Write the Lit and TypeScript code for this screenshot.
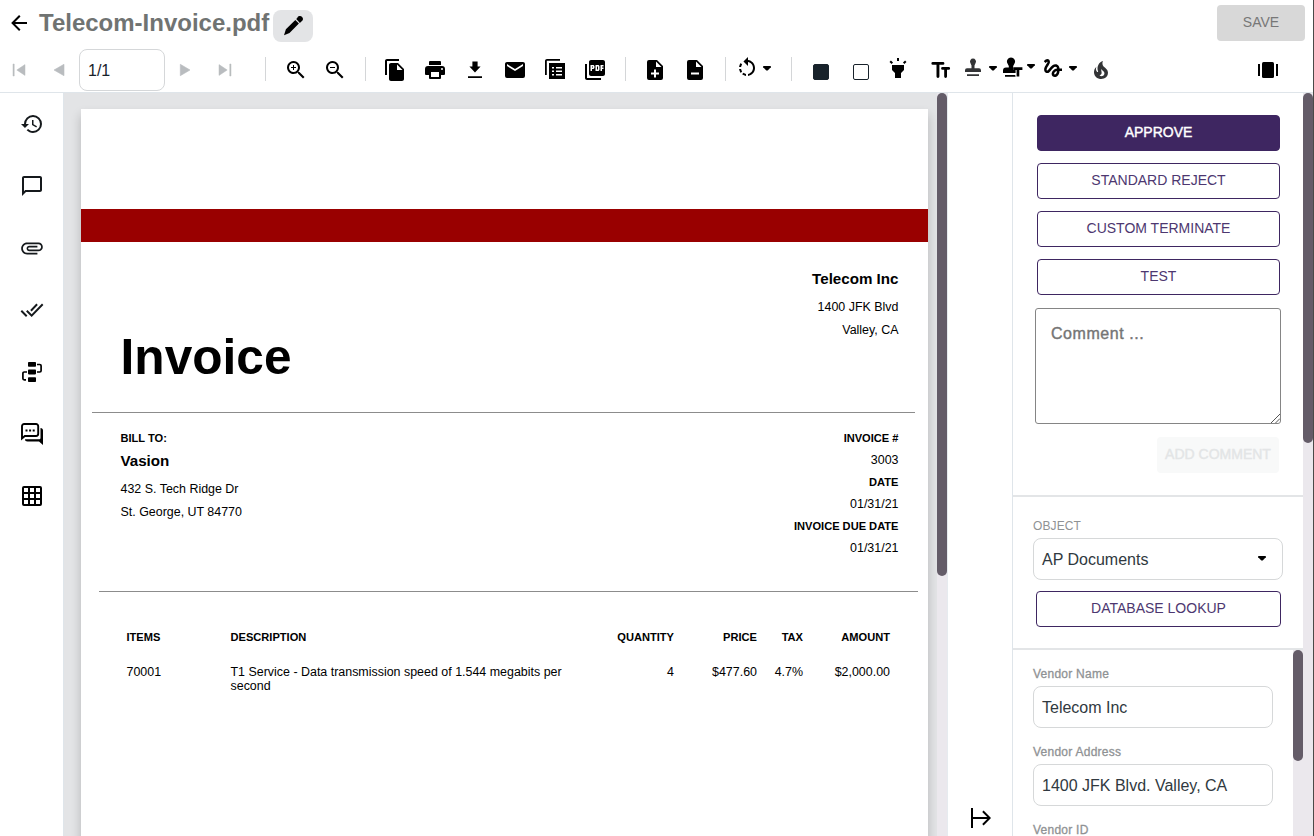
import { LitElement, html, css, svg, nothing } from "lit";
import { customElement, property } from "lit/decorators.js";

const ICONS: Record<string, unknown> = {
  back: svg`<path d="M20 11v2H8l5.5 5.5-1.42 1.42L4.16 12l7.92-7.92L13.5 5.5 8 11z"/>`,
  pencil: svg`<path d="M3 21.200l1.900-6L14.300 5.900l3.600 3.600-9.400 9.400zM15.200 4.900l1-1a3 3 0 1 1 3.900 3.900l-1.200 1.200z"/>`,
  first: svg`<path d="M6 6h1.2v12H6zM18 6.6v10.8L9.800 12z" stroke="currentColor" stroke-width=".5" stroke-linejoin="round"/>`,
  prev: svg`<path d="M17 6.300v11.400L7 12z" stroke="currentColor" stroke-width=".6" stroke-linejoin="round"/>`,
  next: svg`<path d="M7.300 6.300v11.400L17 12z" stroke="currentColor" stroke-width=".6" stroke-linejoin="round"/>`,
  last: svg`<path d="M6 6.6v10.8l8.200-5.400zM16.800 6H18v12h-1.200z" stroke="currentColor" stroke-width=".5" stroke-linejoin="round"/>`,
  zoomIn: svg`<path d="M15.5 14l5 5-1.5 1.5-5-5v-.79l-.27-.28A6.5 6.5 0 1 1 14.43 13.73l.28.27zM9.5 14a4.5 4.5 0 1 0 0-9 4.5 4.5 0 0 0 0 9zM12 10h-2v2H9v-2H7V9h2V7h1v2h2z"/>`,
  zoomOut: svg`<path d="M15.5 14l5 5-1.5 1.5-5-5v-.79l-.27-.28A6.5 6.5 0 1 1 14.43 13.73l.28.27zM9.5 14a4.5 4.5 0 1 0 0-9 4.5 4.5 0 0 0 0 9zM12 10H7V9h5z"/>`,
  copy: svg`<path d="M16 1H4c-1.1 0-2 .9-2 2v14h2V3h12V1zm-1 4l6 6v10c0 1.1-.9 2-2 2H7.99C6.89 23 6 22.1 6 21l.01-14c0-1.1.89-2 1.99-2h7zm-1 7h5.5L14 6.5V12z"/>`,
  print: svg`<path fill-rule="evenodd" d="M7 3h10a1 1 0 0 1 1 1v3H6V4a1 1 0 0 1 1-1zM19 8a3 3 0 0 1 3 3v5a1 1 0 0 1-1 1h-3v3a1 1 0 0 1-1 1H7a1 1 0 0 1-1-1v-3H3a1 1 0 0 1-1-1v-5a3 3 0 0 1 3-3zM19 12a1 1 0 1 0 0-2 1 1 0 0 0 0 2zM16 19v-5H8v5z"/>`,
  download: svg`<path d="M5 18.2h14v1.8H5zM9.4 3.5h5.2v5h3L12 14.6 6.4 8.5h3z"/>`,
  mail: svg`<path d="M20 8l-8 5-8-5V6l8 5 8-5zm0-4H4c-1.1 0-2 .9-2 2v12a2 2 0 0 0 2 2h16a2 2 0 0 0 2-2V6c0-1.1-.9-2-2-2z"/>`,
  list: svg`<path fill-rule="evenodd" d="M17 1H4c-1.100 0-2 .9-2 2v14h1.800V2.800H17zM6 5h16v16H6zM9 9v1.600h2V9zM13 9v1.600h6V9zM9 12.500v1.600h2v-1.600zM13 12.500v1.600h6v-1.600zM9 16v1.600h2V16zM13 16v1.600h6V16z"/>`,
  pdf: svg`<path d="M20 2H8c-1.100 0-2 .9-2 2v12c0 1.100.9 2 2 2h12c1.100 0 2-.9 2-2V4c0-1.100-.9-2-2-2zm-8.500 7.500c0 .83-.67 1.500-1.500 1.500H9v2H7.500V7H10c.83 0 1.500.67 1.500 1.500v1zm5 2c0 .83-.67 1.500-1.500 1.500h-2.500V7H15c.83 0 1.500.67 1.500 1.500v3zm4-3H19v1h1.500V11H19v2h-1.500V7h3v1.500zM9 9.500h1v-1H9v1zM4 6H2v14c0 1.100.9 2 2 2h14v-2H4V6zm10 5.500h1v-3h-1v3z"/>`,
  pageAdd: svg`<path fill-rule="evenodd" d="M14 2H6a2 2 0 0 0-2 2v16a2 2 0 0 0 2 2h12a2 2 0 0 0 2-2V8zM13 9V3.500L18.500 9zM11 11.500h2v3h3v2h-3v3h-2v-3H8v-2h3z"/>`,
  pageRemove: svg`<path fill-rule="evenodd" d="M14 2H6a2 2 0 0 0-2 2v16a2 2 0 0 0 2 2h12a2 2 0 0 0 2-2V8zM13 9V3.500L18.500 9zM8 14.500h8v2H8z"/>`,
  rotate: svg`<path d="M7.11 8.53L5.7 7.11C4.8 8.27 4.24 9.61 4.07 11h2.02c.14-.87.49-1.72 1.02-2.47zM6.09 13H4.07c.17 1.39.72 2.73 1.62 3.89l1.41-1.42c-.52-.75-.87-1.59-1.01-2.47zm1.01 5.32c1.16.9 2.51 1.44 3.9 1.61V17.9c-.87-.15-1.71-.49-2.46-1.03L7.1 18.32zM13 4.07V1L8.45 5.55 13 10V6.09c2.84.48 5 2.94 5 5.91s-2.16 5.43-5 5.91v2.02c3.95-.49 7-3.85 7-7.93s-3.05-7.44-7-7.93z"/>`,
  light: svg`<path d="M6 14l3 3v5h6v-5l3-3V9H6zm5-12h2v3h-2zM3.5 5.875L4.914 4.46l2.12 2.122L5.62 7.997zm13.46.71l2.123-2.12 1.414 1.414L18.375 8z"/>`,
  text: svg`<path d="M3.800 4A1.400 1.400 0 0 0 3.800 6.800H7.500V18.500a1.400 1.400 0 0 0 2.900 0V6.800H14A1.400 1.400 0 0 0 14 4zM13.500 9a1.400 1.400 0 0 0 0 2.800H15.200v6.700a1.400 1.400 0 0 0 2.800 0V11.800H19.700a1.400 1.400 0 0 0 0-2.800z"/>`,
  stamp: svg`<path d="M12 2.500a3 3 0 0 1 2.700 4.300L13.500 9.500v2.700H18a2 2 0 0 1 2 2V16H4v-1.800a2 2 0 0 1 2-2h4.500V9.500L9.300 6.800A3 3 0 0 1 12 2.500zM6 18.200h12V20H6z"/>`,
  stampText: svg`<path d="M10 1.400a4 4 0 0 1 3.500 6L12.200 10v1.400H18V17H2v-2.600a3 3 0 0 1 3-3h2.800V10L6.500 7.400a4 4 0 0 1 3.500-6zM4 18.900h10.500v1.800H4z"/><path d="M12.700 12.300h7.500M16.400 12.500V20" fill="none" stroke="#fff" stroke-width="3.600"/><path d="M12.600 11.200h8.800v2.700h-3.100V20.500h-2.700v-6.600h-3z"/>`,
  sign: svg`<path d="M4.590 6.890c.7-.71 1.400-1.350 1.710-1.220.5.2 0 1.030-.3 1.520-.25.420-2.860 3.890-2.860 6.310 0 1.280.48 2.340 1.340 2.980.75.560 1.740.730 2.640.460 1.070-.310 1.950-1.400 3.060-2.770 1.210-1.490 2.830-3.440 4.080-3.440 1.630 0 1.650 1.010 1.760 1.790-3.780.640-5.380 3.670-5.380 5.370 0 1.700 1.440 3.090 3.210 3.090 1.630 0 4.290-1.330 4.690-6.100H21v-2.500h-2.470c-.15-1.650-1.090-4.200-4.030-4.200-2.250 0-4.180 1.910-4.940 2.840-.58.730-2.060 2.480-2.290 2.720-.25.300-.68.840-1.110.840-.45 0-.72-.830-.36-1.920.35-1.090 1.400-2.860 1.850-3.520.78-1.140 1.300-1.920 1.300-3.280C8.950 3.690 7.310 3 6.440 3 5.120 3 3.970 4 3.720 4.250c-.36.360-.66.660-.88.930l1.750 1.710zm9.290 11.660c-.31 0-.74-.26-.74-.72 0-.6.73-2.200 2.870-2.760-.3 2.690-1.430 3.480-2.130 3.480z"/>`,
  fire: svg`<path d="M17.66 11.2C17.43 10.9 17.15 10.64 16.89 10.38C16.22 9.78 15.46 9.35 14.82 8.72C13.33 7.26 13 4.85 13.95 3C13 3.23 12.17 3.75 11.46 4.32C8.87 6.4 7.85 10.07 9.07 13.22C9.11 13.32 9.15 13.42 9.15 13.55C9.15 13.77 9 13.97 8.8 14.05C8.57 14.15 8.33 14.09 8.14 13.93C8.08 13.88 8.04 13.83 8 13.76C6.87 12.33 6.69 10.28 7.45 8.64C5.78 10 4.87 12.3 5 14.47C5.06 14.97 5.12 15.47 5.29 15.97C5.43 16.57 5.7 17.17 6 17.7C7.08 19.43 8.95 20.67 10.96 20.92C13.1 21.19 15.39 20.8 17.03 19.32C18.86 17.66 19.5 15 18.56 12.72L18.43 12.46C18.22 12 17.66 11.2 17.66 11.2M14.5 17.5C14.22 17.74 13.76 18 13.4 18.1C12.28 18.5 11.16 17.94 10.5 17.28C11.69 17 12.4 16.12 12.61 15.23C12.78 14.43 12.46 13.77 12.33 13C12.21 12.26 12.23 11.63 12.5 10.94C12.69 11.32 12.89 11.7 13.13 12C13.9 13 15.11 13.44 15.37 14.8C15.41 14.94 15.43 15.08 15.43 15.23C15.46 16.05 15.1 16.95 14.5 17.5Z"/>`,
  carousel: svg`<rect x="2" y="6" width="2" height="12"/><rect x="6" y="4" width="12" height="16" rx="1.500"/><rect x="20" y="6" width="2" height="12"/>`,
  caret: svg`<path d="M8.200 10h7.600v1.300L12.700 14.400h-1.400L8.200 11.300z"/>`,
  history: svg`<path d="M13.5,8H12V13L16.28,15.54L17,14.33L13.5,12.25V8M13,3A9,9 0 0,0 4,12H1L4.96,16.03L9,12H6A7,7 0 0,1 13,5A7,7 0 0,1 20,12A7,7 0 0,1 13,19C11.07,19 9.32,18.21 8.06,16.94L6.64,18.36C8.27,20 10.5,21 13,21A9,9 0 0,0 22,12A9,9 0 0,0 13,3"/>`,
  chat: svg`<path d="M20 2H4c-1.100 0-2 .9-2 2v18l4-4h14c1.100 0 2-.9 2-2V4c0-1.100-.9-2-2-2zm0 14H5.170L4 17.170V4h16v12z"/>`,
  clip: svg`<path d="M2 12.500C2 9.460 4.460 7 7.500 7H18c2.210 0 4 1.790 4 4s-1.790 4-4 4H9.500C8.120 15 7 13.880 7 12.500S8.120 10 9.500 10H17v1.600H9.410c-1.300 0-1.300 1.800 0 1.800H18c1.300 0 2.400-1.100 2.400-2.400s-1.100-2.400-2.400-2.400H7.500C5.300 8.600 3.600 10.400 3.600 12.500S5.300 16.400 7.500 16.400H17V18H7.500C4.460 18 2 15.540 2 12.500z"/>`,
  checks: svg`<path d="M17.800 7l-1.400-1.400-6.200 6.400 1.400 1.400L17.800 7zM22 5.600L11.660 16.170 7.480 12l-1.410 1.410L11.660 19 23.400 7zM.6 13.410L6 19l1.410-1.410L2 12z"/>`,
  flow: svg`<rect x="8" y="2" width="8" height="4.800" rx=".8"/><rect x="8" y="9.600" width="8" height="4.800" rx=".8"/><rect x="8" y="17.200" width="8" height="4.800" rx=".8"/><path d="M17 4.500h2.800a1.300 1.300 0 0 1 1.300 1.300v4.900a1.300 1.300 0 0 1-1.300 1.300H17M7 12H4.200a1.300 1.300 0 0 0-1.300 1.300v5.200a1.300 1.300 0 0 0 1.300 1.300H6" fill="none" stroke="currentColor" stroke-width="1.700"/>`,
  forum: svg`<path d="M2 16.500V4.200A2.200 2.200 0 0 1 4.200 2H16a2.200 2.200 0 0 1 2.200 2.200v7.600A2.200 2.200 0 0 1 16 14H4.800z" fill="none" stroke="currentColor" stroke-width="1.900"/><path d="M5.500 7.500h2v2h-2zM9.100 7.500h2v2h-2zM12.700 7.500h2v2h-2zM20.500 6c1.600.2 2.500.9 2.500 2.500V23l-4-3.500H7.500c-1.600 0-2.500-.8-2.500-2.200h14c.9 0 1.500-.5 1.500-1.300z"/>`,
  grid: svg`<path fill-rule="evenodd" d="M4 2h16a2 2 0 0 1 2 2v16a2 2 0 0 1-2 2H4a2 2 0 0 1-2-2V4a2 2 0 0 1 2-2zM4 4v4h4V4zM10 4v4h4V4zM16 4v4h4V4zM4 10v4h4v-4zM10 10v4h4v-4zM16 10v4h4v-4zM4 16v4h4v-4zM10 16v4h4v-4zM16 16v4h4v-4z"/>`,
  collapse: svg`<path d="M2 2h2v20H2zM4 11h14.200l-5-5 1.400-1.400L22 12l-7.400 7.400-1.400-1.400 5-5H4z"/>`,
};

@customElement("ui-icon")
class UiIcon extends LitElement {
  @property() name = "";
  @property({ type: Number }) size = 24;
  static styles = css`
    :host { display: inline-flex; flex: none; }
    svg { display: block; fill: currentColor; }
  `;
  render() {
    return html`<svg width=${this.size} height=${this.size} viewBox="0 0 24 24">${ICONS[this.name]}</svg>`;
  }
}

type Tool = { icon?: string; kind?: string; cls?: string; caret?: boolean };

const TOOLS: Tool[] = [
  { kind: "rule", cls: "wide" },
  { icon: "zoomIn", cls: "nudge" }, { icon: "zoomOut" },
  { kind: "rule" },
  { icon: "copy" }, { icon: "print" }, { icon: "download" }, { icon: "mail" }, { icon: "list" }, { icon: "pdf" },
  { kind: "rule" },
  { icon: "pageAdd" }, { icon: "pageRemove" },
  { kind: "rule" },
  { icon: "rotate", caret: true, cls: "rot" },
  { kind: "rule" },
  { kind: "swatch", cls: "solid" }, { kind: "swatch" },
  { icon: "light", cls: "lamp" },
  { icon: "text", cls: "txt" },
  { icon: "stamp", caret: true, cls: "soft" },
  { icon: "stampText", caret: true, cls: "tight" },
  { icon: "sign", caret: true },
  { icon: "fire", cls: "fire" },
];

@customElement("tool-bar")
class ToolBar extends LitElement {
  static styles = css`
    :host { display: flex; height: 44px; align-items: center; padding-right: 25px; color: #000; }
    .cell { width: 40px; display: flex; justify-content: center; flex: none; box-sizing: border-box; }
    .nav { color: #b9bcbf; }
    .nav.lead { width: 39px; padding-right: 2px; }
    .nudge { padding-left: 1px; }
    .page { width: 86px; height: 42px; box-sizing: border-box; border: 1px solid #d5d7d9; border-radius: 8px;
      padding: 0 8px; font: 16px/42px "Liberation Sans", Arial, sans-serif; color: #18222b; flex: none; }
    .rule { width: 1px; height: 24px; background: #d4d6d8; margin: 0 9px 2px 10px; flex: none; }
    .rule.wide { margin-left: 20px; }
    .swatch { width: 16px; height: 16px; box-sizing: border-box; border: 1px solid #18222b; border-radius: 2px; margin-top: 4px; }
    .swatch.solid { background: #18222b; }
    .cell.lamp { width: 34px; }
    .cell.txt { width: 46px; justify-content: flex-start; padding-left: 14px; }
    .cell.lamp, .drop { margin-top: -4px; }
    .drop { display: flex; align-items: center; width: 40px; flex: none; }
    .drop.rot { width: 46px; }
    .drop ui-icon + ui-icon { margin-left: -4px; }
    .drop.tight ui-icon + ui-icon { margin: -4px 0 0 -6px; }
    .soft ui-icon:first-child, .fire { color: #333436; }
    .cell.fire { width: 24px; margin-left: 8px; }
    .end { margin-left: auto; width: 40px; display: flex; justify-content: center; }
  `;
  tool(t: Tool) {
    if (t.kind === "rule") return html`<div class="rule ${t.cls ?? ""}"></div>`;
    if (t.kind === "swatch") return html`<div class="cell"><div class="swatch ${t.cls ?? ""}"></div></div>`;
    if (t.caret) return html`<div class="drop ${t.cls ?? ""}"><ui-icon name=${t.icon}></ui-icon><ui-icon name="caret"></ui-icon></div>`;
    return html`<div class="cell ${t.cls ?? ""}"><ui-icon name=${t.icon}></ui-icon></div>`;
  }
  render() {
    return html`
      <div class="cell nav lead"><ui-icon name="first"></ui-icon></div>
      <div class="cell nav"><ui-icon name="prev"></ui-icon></div>
      <div class="page">1/1</div>
      <div class="cell nav"><ui-icon name="next"></ui-icon></div>
      <div class="cell nav"><ui-icon name="last"></ui-icon></div>
      ${TOOLS.map((t) => this.tool(t))}
      <div class="end"><ui-icon name="carousel"></ui-icon></div>
    `;
  }
}

@customElement("invoice-page")
class InvoicePage extends LitElement {
  static styles = css`
    :host { display: block; width: 847px; height: 1100px; background: #fff; flex: none; padding-top: 100px; box-sizing: border-box;
      font-family: "Liberation Sans", Arial, sans-serif; color: #000; font-size: 12.450px;
      box-shadow: 0 6px 10px rgba(0, 0, 0, .2); }
    .band { height: 33px; background: #990000; }
    .head { display: flex; justify-content: space-between; height: 170px; padding: 0 29.500px 0 39.600px; box-sizing: border-box; }
    h1 { margin: 86px 0 0; font-size: 49.600px; line-height: 58px; }
    .lines { display: flex; flex-direction: column; }
    .right { text-align: right; }
    .lines span { height: 23px; line-height: 23px; white-space: nowrap; }
    .lines .name { font-size: 15.150px; font-weight: bold; height: 28px; line-height: 24px; }
    .head .right { padding-top: 25px; }
    .head .right .name { height: 29px; }
    hr { border: 0; height: 1px; background: #8c8c8c; margin: 0; }
    .r1 { width: 823px; margin-left: 11px; }
    .r2 { width: 819px; margin-left: 18px; }
    .bill { display: flex; justify-content: space-between; height: 178px; padding: 14px 29.500px 0 39.500px; box-sizing: border-box; }
    .bill .right span { height: 22px; line-height: 22px; }
    .bill .cap, .cap { font-size: 11.100px; font-weight: bold; height: 22px; line-height: 22px; }
    .bill .name { height: 29px; }
    .table { display: grid; grid-template-columns: 104px 355px 88.500px 83px 46px 87px; padding: 34px 0 0 45.500px; }
    .table .cap { height: 25px; }
    .table .cell { line-height: 14px; padding-top: 14px; }
  `;
  render() {
    const cols = ["ITEMS", "DESCRIPTION", "QUANTITY", "PRICE", "TAX", "AMOUNT"];
    const row = ["70001", "T1 Service - Data transmission speed of 1.544 megabits per second", "4", "$477.60", "4.7%", "$2,000.00"];
    const due = [["INVOICE #", "3003"], ["DATE", "01/31/21"], ["INVOICE DUE DATE", "01/31/21"]];
    return html`
      <div class="band"></div>
      <div class="head">
        <h1>Invoice</h1>
        <div class="lines right"><span class="name">Telecom Inc</span><span>1400 JFK Blvd</span><span>Valley, CA</span></div>
      </div>
      <hr class="r1" />
      <div class="bill">
        <div class="lines"><span class="cap">BILL TO:</span><span class="name">Vasion</span><span>432 S. Tech Ridge Dr</span><span>St. George, UT 84770</span></div>
        <div class="lines right">${due.map(([k, v]) => html`<span class="cap">${k}</span><span>${v}</span>`)}</div>
      </div>
      <hr class="r2" />
      <div class="table">
        ${cols.map((c, i) => html`<div class="cap ${i > 1 ? "right" : ""}">${c}</div>`)}
        ${row.map((c, i) => html`<div class="cell ${i > 1 ? "right" : ""}">${c}</div>`)}
      </div>
    `;
  }
}

@customElement("side-panel")
class SidePanel extends LitElement {
  static styles = css`
    :host { display: flex; flex-direction: column; width: 290px; border-left: 1px solid #dfe5ea; background: #fff;
      font-family: "Liberation Sans", Arial, sans-serif; flex: none; overflow: hidden; }
    section { box-sizing: border-box; border-bottom: 2px solid #e3e5e7; flex: none; }
    .btn { height: 36px; box-sizing: border-box; border: 1px solid #3e2661; border-radius: 4px; text-align: center;
      color: #4d3770; font-size: 14px; line-height: 33px; }
    .primary { background: #3e2661; color: #fff; -webkit-text-stroke: .4px #fff; }
    .actions { height: 404px; padding: 22px 22px 0 22px; }
    .stack { display: flex; flex-direction: column; gap: 12px; padding: 0 1px 0 2px; }
    .note { display: flex; align-items: flex-end; justify-content: flex-end; height: 116px; box-sizing: border-box; margin-top: 13px;
      border: 1px solid #858585; border-radius: 3px; }
    .hint { flex: 1; align-self: flex-start; padding: 15px; font-size: 16px; line-height: 19px; letter-spacing: .550px;
      color: #757575; -webkit-text-stroke: .4px #757575; }
    .grip { width: 9px; height: 9px; display: block; }
    .add { width: 122px; height: 36px; margin: 13px 2px 0 auto; border-radius: 4px; background: #f8f9f9; color: #e3e5e6;
      -webkit-text-stroke: .4px #e3e5e6; font-size: 14px; line-height: 35px; text-align: center; }
    .object { height: 153px; padding: 19px 20px 0; }
    .label { font-size: 12px; line-height: 20px; height: 22px; color: #8f9294; letter-spacing: .1px; }
    .field { height: 42px; box-sizing: border-box; border: 1px solid #d6d8d9; border-radius: 8px; padding: 0 8px;
      font-size: 16px; line-height: 41px; color: #303940; display: flex; align-items: center; }
    .field ui-icon { margin: -2px 0 0 auto; color: #000; }
    .object .btn { margin: 11px 2px 0 3px; }
    .form { flex: 1; display: flex; min-height: 0; overflow: hidden; }
    .fields { flex: 1; padding: 14px 20px 0; }
    .fields .label { letter-spacing: .25px; -webkit-text-stroke: .3px #8f9294; }
    .fields .field { margin-bottom: 14px; }
    .track { width: 10px; background: #ebe8ed; }
    .thumb { height: 111px; background: #645c68; border-radius: 5px; }
  `;
  render() {
    return html`
      <section class="actions">
        <div class="stack">
          <div class="btn primary">APPROVE</div>
          ${["STANDARD REJECT", "CUSTOM TERMINATE", "TEST"].map((t) => html`<div class="btn">${t}</div>`)}
        </div>
        <div class="note">
          <div class="hint">Comment ...</div>
          <svg class="grip" viewBox="0 0 9 9"><path d="M0 9L9 0M4.500 9L9 4.500" stroke="#555" fill="none" /></svg>
        </div>
        <div class="add">ADD COMMENT</div>
      </section>
      <section class="object">
        <div class="label">OBJECT</div>
        <div class="field">AP Documents<ui-icon name="caret"></ui-icon></div>
        <div class="btn">DATABASE LOOKUP</div>
      </section>
      <div class="form">
        <div class="fields">
          ${[["Vendor Name", "Telecom Inc"], ["Vendor Address", "1400 JFK Blvd. Valley, CA"], ["Vendor ID", ""]].map(
            ([k, v]) => html`<div class="label">${k}</div>${v ? html`<div class="field">${v}</div>` : nothing}`
          )}
        </div>
        <div class="track"><div class="thumb"></div></div>
      </div>
    `;
  }
}

@customElement("app-root")
class AppRoot extends LitElement {
  static styles = css`
    :host { display: flex; flex-direction: column; width: 1314px; height: 836px; overflow: hidden; background: #fff;
      font-family: "Liberation Sans", Arial, sans-serif; box-sizing: border-box; border-right: 1px solid #4a4a48; }
    header { display: flex; height: 48px; flex: none; }
    .back { padding: 11px 0 0 7px; width: 32px; }
    .title { font-size: 24px; line-height: 28px; font-weight: bold; color: #707372; padding-top: 9px; white-space: nowrap; width: 234px; }
    .edit { width: 40px; height: 32px; margin-top: 10px; border-radius: 8px; background: #e3e4e6; display: flex; align-items: center; justify-content: center; }
    .save { width: 88px; height: 36px; margin: 5px 8px 0 auto; border-radius: 4px; background: #d8d8d8; color: #777; font-size: 14px; line-height: 34px; text-align: center; }
    main { display: flex; flex: 1; min-height: 0; border-top: 1px solid #dfe5ea; }
    nav { width: 63px; border-right: 1px solid #dfe5ea; box-sizing: content-box; display: flex; flex-direction: column; align-items: center; gap: 36px; padding-top: 18px; color: #15191c; }
    nav ui-icon { height: 26px; align-items: center; }
    nav ui-icon.dark { color: #000; }
    .viewer { width: 873px; background: #e3e4e6; overflow: hidden; padding: 16px 0 0 17px; box-sizing: border-box; }
    .track { width: 10px; background: #ebe8ed; flex: none; }
    .thumb { background: #645c68; border-radius: 5px; }
    .thumb.doc { height: 483px; }
    .thumb.side { height: 350px; }
    .gutter { flex: 1; display: flex; align-items: flex-end; justify-content: center; padding: 0 0 6px 2px; border-left: 1px solid #e6ebef; }
  `;
  render() {
    const nav = ["history", "chat", "clip", "checks", "flow", "forum", "grid"];
    return html`
      <header>
        <div class="back"><ui-icon name="back"></ui-icon></div>
        <div class="title">Telecom-Invoice.pdf</div>
        <div class="edit"><ui-icon name="pencil"></ui-icon></div>
        <div class="save">SAVE</div>
      </header>
      <tool-bar></tool-bar>
      <main>
        <nav>${nav.map((n, i) => html`<ui-icon class=${i > 3 ? "dark" : ""} name=${n} size=${n === "clip" ? 26 : 24}></ui-icon>`)}</nav>
        <div class="viewer"><invoice-page></invoice-page></div>
        <div class="track"><div class="thumb doc"></div></div>
        <div class="gutter"><ui-icon name="collapse"></ui-icon></div>
        <side-panel></side-panel>
        <div class="track"><div class="thumb side"></div></div>
      </main>
    `;
  }
}
